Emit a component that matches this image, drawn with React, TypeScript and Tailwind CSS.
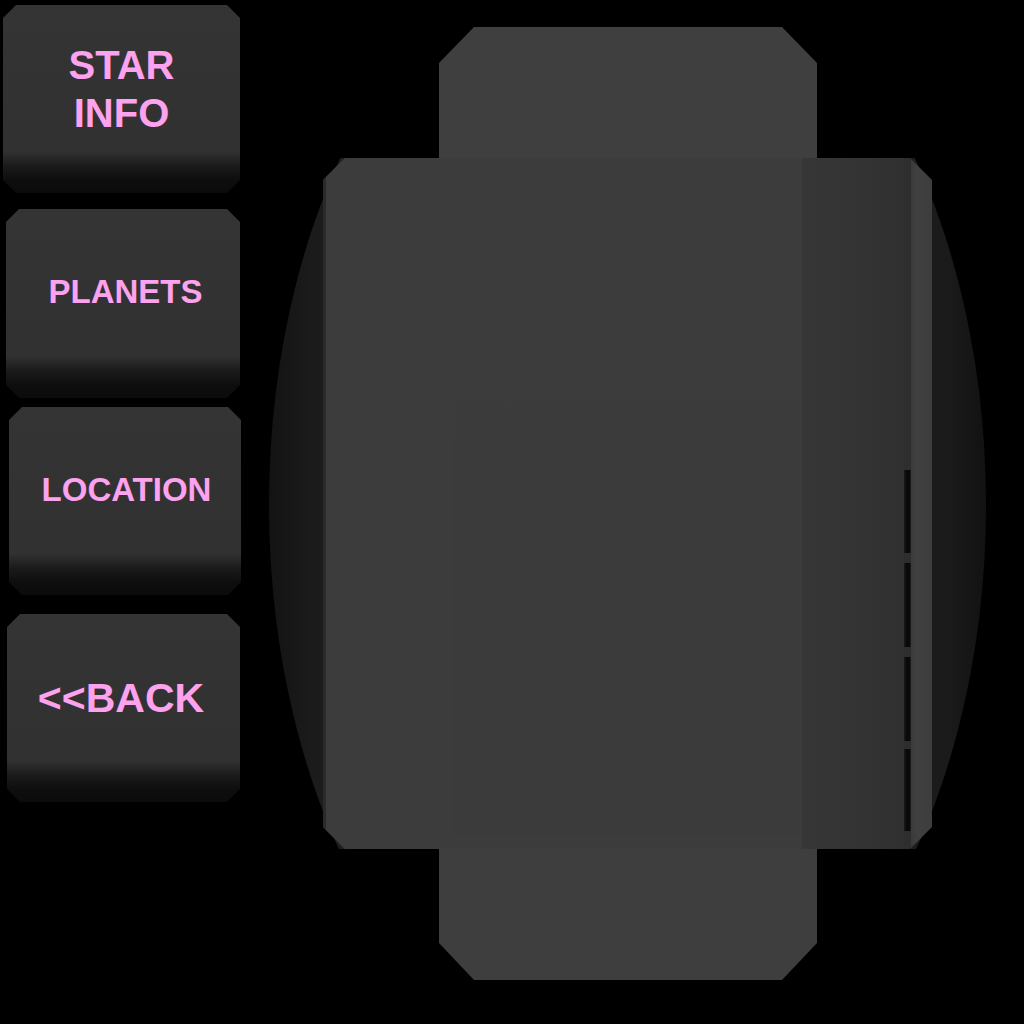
import React from 'react'

const pink = "text-[#fca2ee]"

type Btn = {
  lines: string[];
  box: string;
  text: string;
};

const buttons: Btn[] = [
  { lines: ["STAR", "INFO"], box: "ml-[3px] mt-[5px] w-[237px] h-[188px]", text: "text-[40px] leading-[48px] pb-[20px] pl-[0px]" },
  { lines: ["PLANETS"], box: "ml-[6px] mt-[16px] w-[234px] h-[189px]", text: "text-[33px] leading-[36px] pb-[24px] pl-[5px]" },
  { lines: ["LOCATION"], box: "ml-[9px] mt-[9px] w-[232px] h-[188px]", text: "text-[33px] leading-[36px] pb-[22px] pl-[3px]" },
  { lines: ["<<BACK"], box: "ml-[7px] mt-[19px] w-[233px] h-[188px]", text: "text-[41px] leading-[44px] pb-[21px] pr-[5px]" },
]

const MenuButton = ({ b }: { b: Btn }) => (
  <button
    className={`${b.box} flex flex-col items-center justify-center bg-[linear-gradient(to_bottom,#343434_0%,#313131_78%,#1a1a1a_86%,#0e0e0e_93%,#0b0b0b_100%)] [clip-path:polygon(13px_0,calc(100%_-_13px)_0,100%_13px,100%_calc(100%_-_13px),calc(100%_-_13px)_100%,13px_100%,0_calc(100%_-_13px),0_13px)]`}
  >
    <div className={`${b.text} ${pink} font-bold font-['Liberation_Sans',Arial,sans-serif] text-center`}>
      {b.lines.map((l) => (
        <div key={l}>{l}</div>
      ))}
    </div>
  </button>
)

const Slit = ({ h, mt }: { h: string; mt: string }) => (
  <div className={`${h} ${mt} w-full bg-[linear-gradient(to_right,#1a1a1a,#080808_40%,#0a0a0a_80%,#222)]`} />
)

export default function App() {
  return (
    <div className="w-[1024px] h-[1024px] bg-black flex overflow-hidden">
      <div className="w-[241px] flex flex-col shrink-0">
        {buttons.map((b) => (
          <MenuButton key={b.lines.join()} b={b} />
        ))}
      </div>

      <div className="ml-[28px] pt-[27px] flex flex-col w-[717px]">
        {/* top tab */}
        <div className="ml-[170px] w-[378px] h-[131px] bg-[#3f3f3f] [clip-path:polygon(35px_0,343px_0,378px_36px,378px_131px,0_131px,0_36px)]" />

        {/* middle row with the dark halo behind */}
        <div className="relative w-[717px] h-[691px] overflow-hidden">
          <div className="absolute left-0 top-[-233px] w-[717px] h-[1160px] rounded-[50%] bg-[linear-gradient(to_right,#131313,#1b1b1b_6%,#1e1e1e_10%,#1d1d1d_90%,#1a1a1a_95%,#121212)]" />
          <div className="relative ml-[54px] w-[609px] h-[691px] flex [clip-path:polygon(22px_0,587px_0,609px_22px,609px_669px,587px_691px,22px_691px,0_669px,0_22px)]">
            <div className="w-[479px] h-full bg-[#3c3c3c] flex">
              <div className="w-[3px] h-full bg-[#2a2a2a]" />
              <div className="w-[127px] h-full bg-[#3c3c3c]" />
              <div className="mt-[17px] w-[347px] h-[660px] bg-[linear-gradient(to_bottom,#3c3c3c,#3b3b3b_50%,#3b3b3b)]" />
            </div>
            <div className="w-[102px] h-full bg-[linear-gradient(to_right,#363636,#333333_60%,#303030)]" />
            <div className="w-[7px] h-full flex flex-col bg-[#2e2e2e]">
              <Slit mt="mt-[312px]" h="h-[83px]" />
              <Slit mt="mt-[10px]" h="h-[84px]" />
              <Slit mt="mt-[10px]" h="h-[84px]" />
              <Slit mt="mt-[8px]" h="h-[82px]" />
            </div>
            <div className="w-[21px] h-full bg-[linear-gradient(to_right,#3a3a3a,#404040_30%,#3d3d3d)]" />
          </div>
        </div>

        {/* bottom tab */}
        <div className="ml-[170px] w-[378px] h-[131px] bg-[#3e3e3e] [clip-path:polygon(0_0,378px_0,378px_94px,343px_131px,35px_131px,0_94px)]" />
      </div>
    </div>
  )
}
